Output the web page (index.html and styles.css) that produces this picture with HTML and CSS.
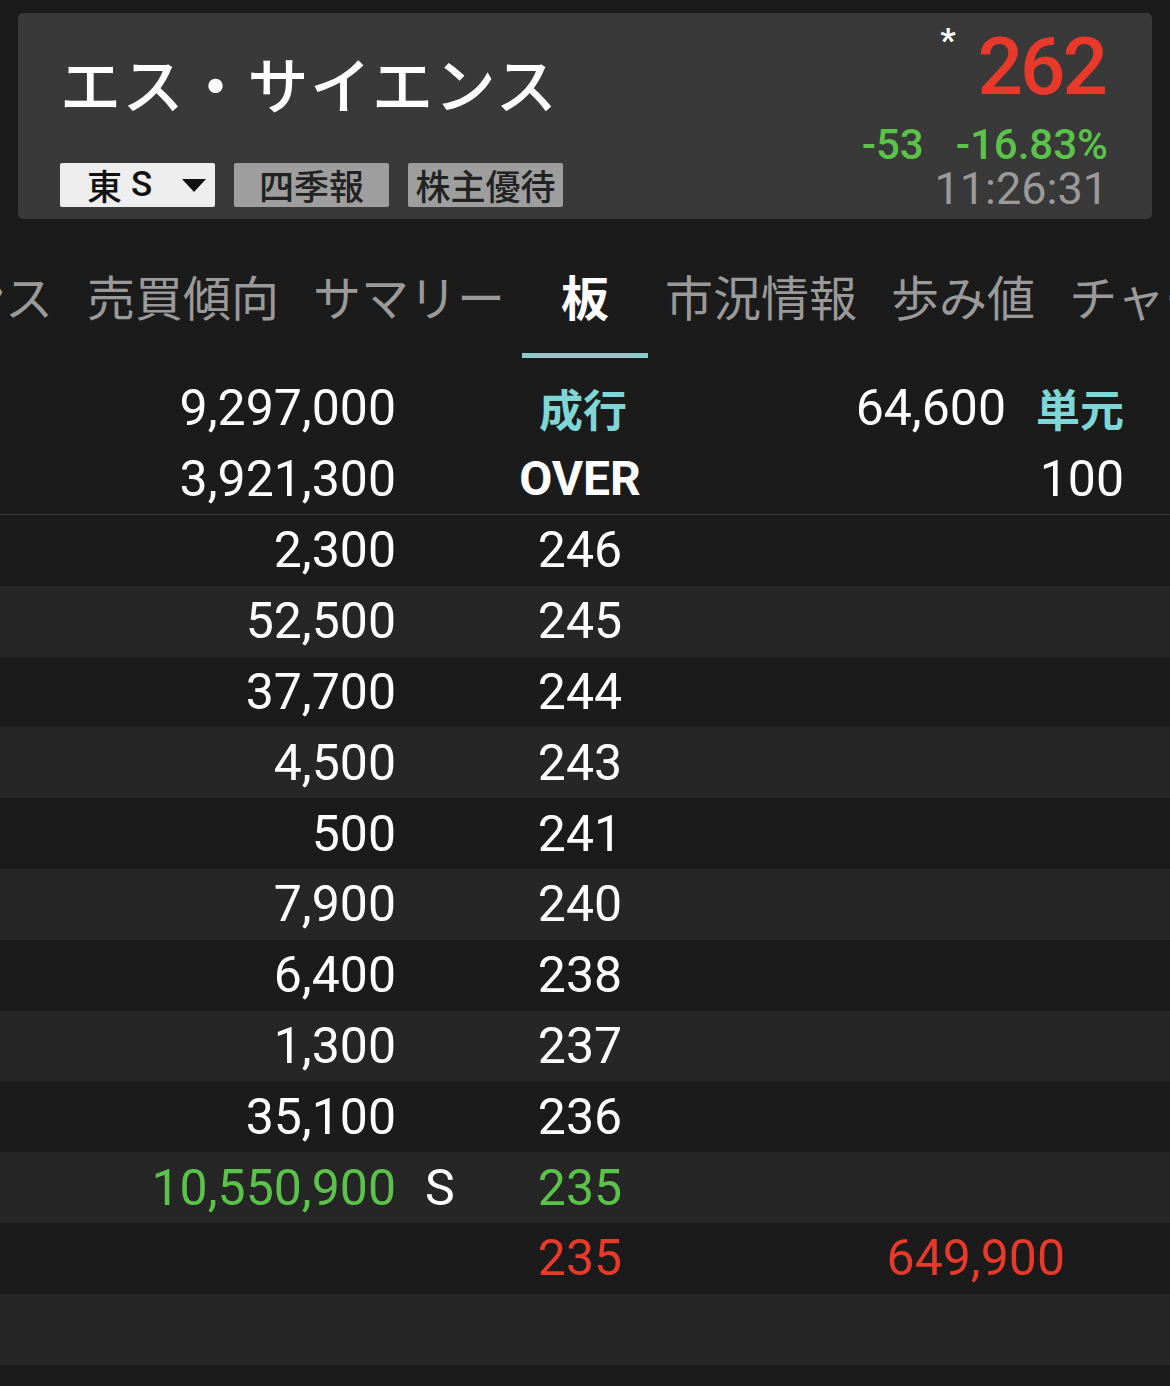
FILE: index.html
```html
<!DOCTYPE html>
<html lang="ja">
<head>
    <meta charset="utf-8">
    <title>エス・サイエンス 板</title>
    <link rel="stylesheet" href="styles.css">
</head>
<body>
    <!-- Stock header -->
    <div class="header-wrap">
        <div class="card">
            <div class="card-left">
                <div class="title">エス・サイエンス</div>
                <div class="badges">
                    <span class="badge market">東<span class="code">S</span><span class="caret"></span></span>
                    <span class="badge">四季報</span>
                    <span class="badge">株主優待</span>
                </div>
            </div>
            <div class="card-right">
                <div class="price-line"><span class="star">*</span><span class="price">262</span></div>
                <div class="change"><span>-53</span><span>-16.83%</span></div>
                <div class="time">11:26:31</div>
            </div>
        </div>
    </div>

    <!-- Tabs -->
    <div class="tabs">
        <div class="tab">バランス</div>
        <div class="tab">売買傾向</div>
        <div class="tab">サマリー</div>
        <div class="tab active">板</div>
        <div class="tab">市況情報</div>
        <div class="tab">歩み値</div>
        <div class="tab">チャート</div>
    </div>

    <!-- Order book -->
    <div class="book-head">
        <div class="row">
            <div class="qty">9,297,000</div>
            <div class="mark"></div>
            <div class="price-col market-order">成行</div>
            <div class="right-col"><span>64,600</span><span class="unit">単元</span></div>
        </div>
        <div class="row">
            <div class="qty">3,921,300</div>
            <div class="mark"></div>
            <div class="price-col over">OVER</div>
            <div class="right-col"><span>100</span></div>
        </div>
    </div>

    <div class="book">
        <div class="row"><div class="qty">2,300</div><div class="mark"></div><div class="price-col">246</div><div class="ask"></div></div>
        <div class="row"><div class="qty">52,500</div><div class="mark"></div><div class="price-col">245</div><div class="ask"></div></div>
        <div class="row"><div class="qty">37,700</div><div class="mark"></div><div class="price-col">244</div><div class="ask"></div></div>
        <div class="row"><div class="qty">4,500</div><div class="mark"></div><div class="price-col">243</div><div class="ask"></div></div>
        <div class="row"><div class="qty">500</div><div class="mark"></div><div class="price-col">241</div><div class="ask"></div></div>
        <div class="row"><div class="qty">7,900</div><div class="mark"></div><div class="price-col">240</div><div class="ask"></div></div>
        <div class="row"><div class="qty">6,400</div><div class="mark"></div><div class="price-col">238</div><div class="ask"></div></div>
        <div class="row"><div class="qty">1,300</div><div class="mark"></div><div class="price-col">237</div><div class="ask"></div></div>
        <div class="row"><div class="qty">35,100</div><div class="mark"></div><div class="price-col">236</div><div class="ask"></div></div>
        <div class="row"><div class="qty green">10,550,900</div><div class="mark">S</div><div class="price-col green">235</div><div class="ask"></div></div>
        <div class="row"><div class="qty"></div><div class="mark"></div><div class="price-col red">235</div><div class="ask red">649,900</div></div>
        <div class="row"><div class="qty"></div><div class="mark"></div><div class="price-col"></div><div class="ask"></div></div>
    </div>
</body>
</html>
```

FILE: styles.css
```css
body {
    margin: 0;
    width: 1170px;
    height: 1386px;
    overflow: hidden;
    background-color: #1b1b1b;
    color: #fff;
    font-family: Roboto, "Noto Sans CJK JP", sans-serif;
}

/* Header card */
.header-wrap {
    padding: 13px 18px 0;
}

.card {
    height: 206px;
    box-sizing: border-box;
    background: #393939;
    border-radius: 5px;
    display: flex;
    justify-content: space-between;
    padding: 0 44px 0 42px;
}

.title {
    margin-top: 30px;
    font-family: "Noto Sans CJK JP", sans-serif;
    font-size: 61px;
    font-weight: 500;
    line-height: 80px;
    letter-spacing: 1.5px;
}

.badges {
    display: flex;
    gap: 19px;
    margin-top: 40px;
}

.badge {
    width: 155px;
    height: 44px;
    background: #9e9e9e;
    color: #222;
    border-radius: 2px;
    font-family: "Noto Sans CJK JP", sans-serif;
    font-size: 35px;
    font-weight: 500;
    line-height: 44px;
    text-align: center;
}

.badge.market {
    background: #eeeeee;
    color: #111;
    display: flex;
    align-items: center;
    padding-left: 27px;
    box-sizing: border-box;
}

.code {
    margin-left: 9px;
    font-family: Roboto, sans-serif;
}

.caret {
    width: 0;
    height: 0;
    margin-left: 30px;
    border-left: 12px solid transparent;
    border-right: 12px solid transparent;
    border-top: 13px solid #111;
}

.card-right {
    display: flex;
    flex-direction: column;
    align-items: flex-end;
}

.price-line {
    display: flex;
    align-items: flex-start;
    margin-top: 4px;
    height: 106px;
}

.star {
    font-size: 34px;
    font-weight: 700;
    line-height: 34px;
    margin-top: 6px;
    margin-right: 22px;
}

.price {
    color: #e8392b;
    font-size: 80px;
    font-weight: 500;
    line-height: 100px;
    letter-spacing: -3px;
    margin-right: 3px;
}

.change {
    display: flex;
    gap: 32px;
    color: #5cc34a;
    font-size: 42px;
    font-weight: 500;
    line-height: 44px;
}

.time {
    color: #9a9a9a;
    font-size: 45px;
    line-height: 44px;
}

/* Tabs */
.tabs {
    display: flex;
    margin-left: -155px;
    height: 139px;
    white-space: nowrap;
}

.tab {
    padding: 52px 17px 0;
    font-family: "Noto Sans CJK JP", sans-serif;
    font-size: 48px;
    color: #9a9a9a;
    line-height: 1;
    box-sizing: border-box;
    height: 139px;
}

.tab.active {
    padding-left: 39px;
    padding-right: 39px;
    color: #fff;
    font-weight: 700;
    border-bottom: 5px solid #8ccbcb;
}

/* Order book */
.row {
    display: grid;
    grid-template-columns: 396px 84px 200px 1fr 105px;
    align-items: center;
    height: 70.8px;
    font-size: 50px;
}

.qty {
    text-align: right;
}

.mark {
    padding-left: 29px;
}

.price-col {
    text-align: center;
}

.ask {
    text-align: right;
}

.book-head {
    padding-top: 14px;
    border-bottom: 1px solid #3a3a3a;
}

.book-head .row {
    height: 71px;
}

.right-col {
    grid-column: 4 / 6;
    display: flex;
    justify-content: flex-end;
    align-items: center;
    gap: 30px;
    padding-right: 46px;
}

.market-order,
.unit {
    color: #7fd6d6;
    font-family: "Noto Sans CJK JP", sans-serif;
    font-size: 44px;
    font-weight: 700;
}

.market-order {
    padding-left: 6px;
}

.over {
    font-size: 48px;
    font-weight: 700;
}

.book .row:nth-child(even) {
    background: #262626;
}

.green {
    color: #5cc34a;
}

.red {
    color: #e8392b;
}
```
